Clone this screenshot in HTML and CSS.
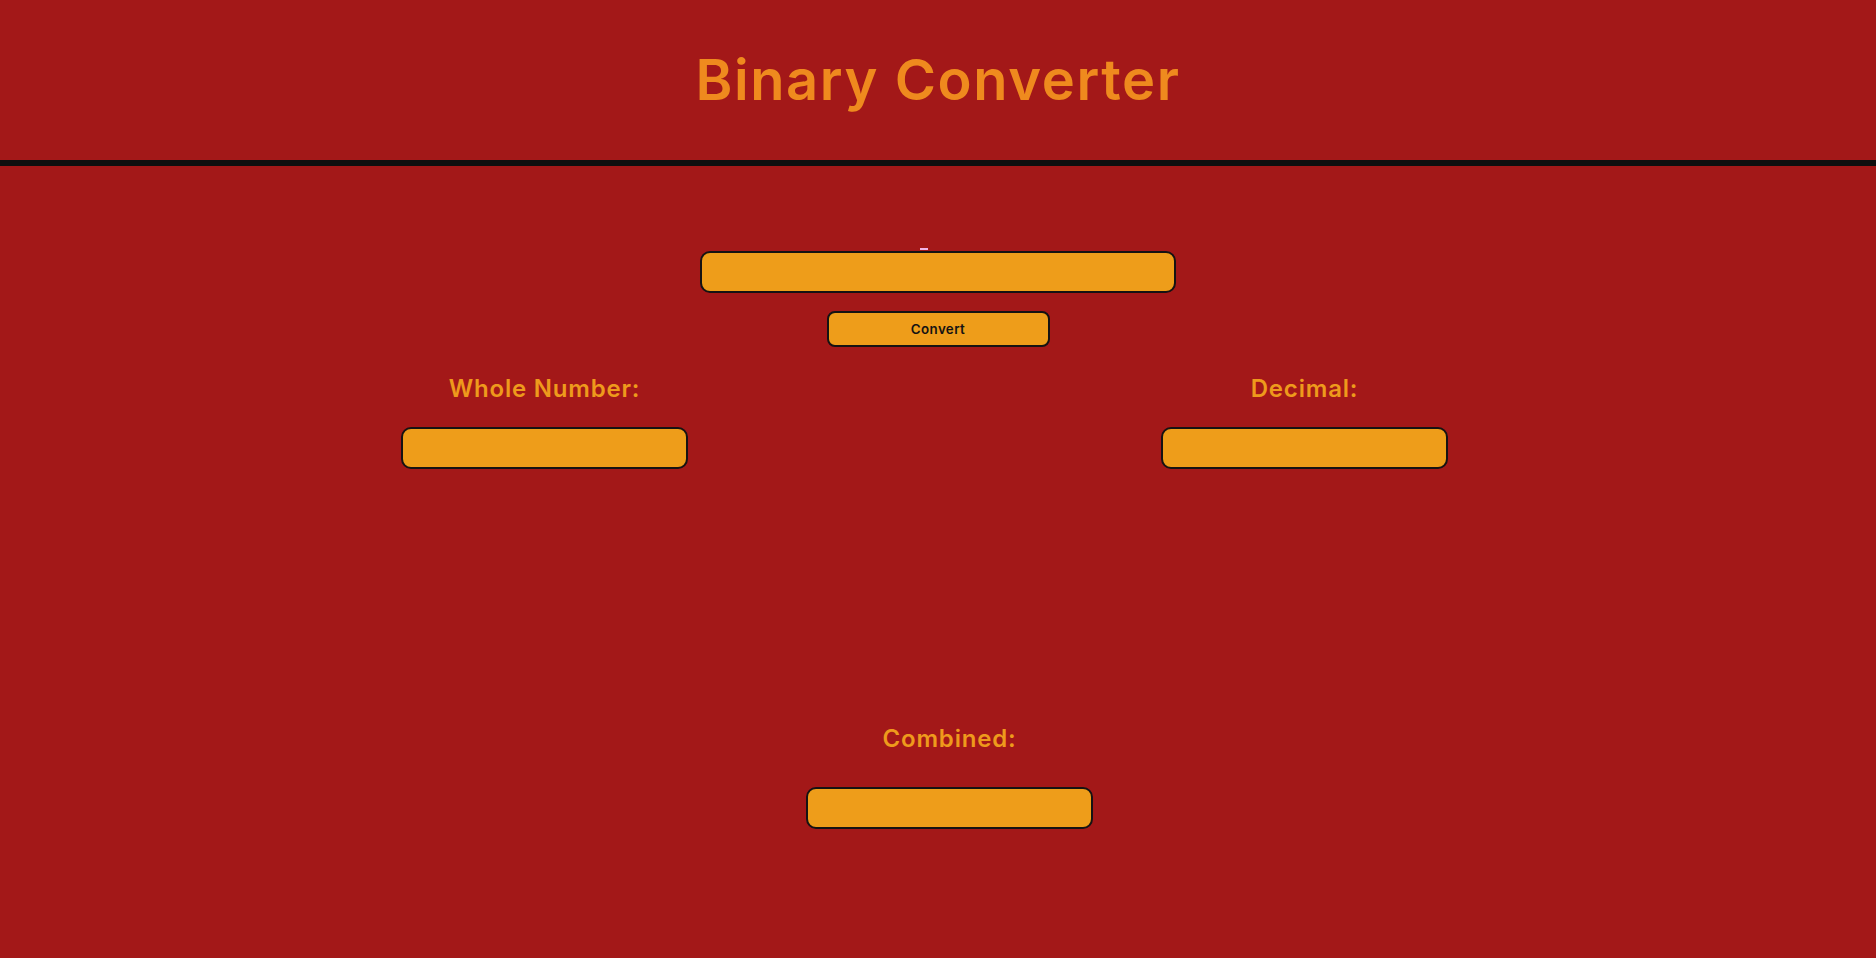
FILE: index.html
```html
<!DOCTYPE html>
<html lang="en">
<head>
<meta charset="utf-8">
<title>Binary Converter</title>
<link rel="stylesheet" href="styles.css">
</head>
<body>
<header class="header">
  <h1 class="title">Binary Converter</h1>
</header>
<main class="main">
  <span class="marker"></span>
  <input class="field field-main" type="text">
  <button class="convert" type="button">Convert</button>
  <div class="row">
    <div class="col">
      <h2 class="label">Whole Number:</h2>
      <input class="field field-small" type="text">
    </div>
    <div class="col">
      <h2 class="label">Decimal:</h2>
      <input class="field field-small" type="text">
    </div>
  </div>
  <div class="combined">
    <h2 class="label">Combined:</h2>
    <input class="field field-small field-combined" type="text">
  </div>
</main>
</body>
</html>
```

FILE: styles.css
```css
* { box-sizing: border-box; }
html, body {
  margin: 0;
  padding: 0;
  background: #a31818;
  font-family: Inter, "Noto Sans", sans-serif;
}
body { min-height: 958px; }

.header {
  height: 166px;
  display: flex;
  align-items: center;
  justify-content: center;
  border-bottom: 6px solid #0f0f0f;
}
.title {
  margin: 0;
  font-size: 56px;
  line-height: 1;
  font-weight: 600;
  letter-spacing: 1.6px;
  color: #ef8a1e;
}

.main {
  display: flex;
  flex-direction: column;
  align-items: center;
  padding-top: 82px;
}
.marker {
  display: block;
  width: 8px;
  height: 2px;
  background: #f2b4e6;
  margin-bottom: 1px;
  margin-left: -28px;
}
.field {
  display: block;
  height: 42px;
  background: #ee9d1a;
  border: 2px solid #151313;
  border-radius: 10px;
  outline: none;
  padding: 0 10px;
  font-family: Inter, sans-serif;
}
.field-main { width: 476px; }
.field-small { width: 287px; }

.convert {
  margin-top: 18px;
  width: 223px;
  height: 36px;
  background: #ee9d1a;
  border: 2px solid #151313;
  border-radius: 8px;
  font-family: Inter, sans-serif;
  font-size: 13.33px;
  font-weight: 600;
  letter-spacing: 0.4px;
  color: #151313;
  padding: 0;
}

.label {
  margin: 0;
  font-size: 24px;
  line-height: 30px;
  font-weight: 600;
  letter-spacing: 0.8px;
  color: #ee9a1c;
  text-align: center;
}

.row {
  margin-top: 27px;
  display: grid;
  grid-template-columns: 287px 287px;
  column-gap: 473px;
  padding-right: 27px;
}
.col {
  display: flex;
  flex-direction: column;
  align-items: center;
  gap: 23px;
}

.combined {
  margin-top: 255px;
  padding-left: 23px;
  display: flex;
  flex-direction: column;
  align-items: center;
  gap: 33px;
}
```
